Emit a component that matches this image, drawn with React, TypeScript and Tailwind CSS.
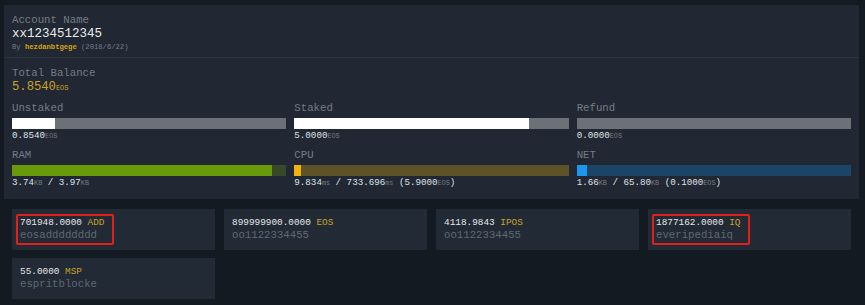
import React from 'react';

interface Bar {
  label: string;
  fill: string;
  track: string;
  pct: number;
  value: React.ReactNode;
}

interface Token {
  amount: string;
  symbol: string;
  account: string;
  marked?: boolean;
}

const Unit = ({ children }: { children: React.ReactNode }) => (
  <span className="text-[6.8px] text-[#737b84] font-normal">{children}</span>
);

const bars: Bar[] = [
  {
    label: 'Unstaked',
    fill: 'bg-white',
    track: 'bg-[#6b7177]',
    pct: 15.5,
    value: (<>0.8540<Unit>EOS</Unit></>)
  },
  {
    label: 'Staked',
    fill: 'bg-white',
    track: 'bg-[#6b7177]',
    pct: 85.4,
    value: (<>5.0000<Unit>EOS</Unit></>)
  },
  {
    label: 'Refund',
    fill: 'bg-white',
    track: 'bg-[#6b7177]',
    pct: 0,
    value: (<>0.0000<Unit>EOS</Unit></>)
  },
  {
    label: 'RAM',
    fill: 'bg-[#689a0c]',
    track: 'bg-[#38482a]',
    pct: 94.9,
    value: (<>3.74<Unit>KB</Unit> / 3.97<Unit>KB</Unit></>)
  },
  {
    label: 'CPU',
    fill: 'bg-[#f2b10f]',
    track: 'bg-[#5d5228]',
    pct: 2.6,
    value: (<>9.834<Unit>ms</Unit> / 733.696<Unit>ms</Unit> (5.9000<Unit>EOS</Unit>)</>)
  },
  {
    label: 'NET',
    fill: 'bg-[#1a98ee]',
    track: 'bg-[#1c4467]',
    pct: 3.7,
    value: (<>1.66<Unit>KB</Unit> / 65.80<Unit>KB</Unit> (0.1000<Unit>EOS</Unit>)</>)
  }
];

const tokens: Token[] = [
  { amount: '701948.0000', symbol: 'ADD', account: 'eosadddddddd', marked: true },
  { amount: '899999900.0000', symbol: 'EOS', account: 'oo1122334455' },
  { amount: '4118.9843', symbol: 'IPOS', account: 'oo1122334455' },
  { amount: '1877162.0000', symbol: 'IQ', account: 'everipediaiq', marked: true },
  { amount: '55.0000', symbol: 'MSP', account: 'espritblocke' }
];

export default function App() {
  return (
    <div className="w-[865px] h-[305px] bg-[#141a21] pt-[5px] pl-[4px] pr-[6px] font-['Liberation_Mono',monospace] overflow-hidden">
      {/* panel del account */}
      <div className="bg-[#212833] pt-[9px] pb-[10px]">
        <div className="px-[8px]">
          <div className="text-[10.7px] leading-[13px] text-[#747c85]">Account Name</div>
          <div className="text-[12.5px] leading-[14px] text-[#e8eaec]">xx1234512345</div>
          <div className="text-[7.2px] leading-[12px] text-[#747c85]">
            By <span className="text-[#d3a414] font-bold">hezdanbtgege</span> (2018/6/22)
          </div>
        </div>
        <div className="mt-[4px] h-px bg-[#2a3539]" />
        <div className="px-[8px]">
          <div className="mt-[9px] text-[10.7px] leading-[13px] text-[#747c85]">Total Balance</div>
          <div className="text-[12.2px] leading-[14px] text-[#c9a227]">
            5.8540<span className="text-[7px] text-[#c9a227]">EOS</span>
          </div>

          <div className="mt-[7px] grid grid-cols-3 gap-x-[8px] gap-y-[7px]">
            {bars.map((b) => (
              <div key={b.label}>
                <div className="text-[10.7px] leading-[13px] text-[#747c85]">{b.label}</div>
                <div className={`mt-[3px] h-[11px] ${b.track}`}>
                  <div className={`h-full ${b.fill}`} style={{ width: `${b.pct}%` }} />
                </div>
                <div className="mt-[1px] text-[9.2px] leading-[12px] text-[#dfe2e5] whitespace-nowrap">{b.value}</div>
              </div>
            ))}
          </div>
        </div>
      </div>

      {/* tokens */}
      <div className="mt-[10px] px-[8px] grid grid-cols-4 gap-x-[9px] gap-y-[8px]">
        {tokens.map((t, i) => (
          <div key={i} className="bg-[#222a35] pt-[5px] pb-[4px] pl-[4px]">
            <div
              className={`inline-block border-2 rounded-[2px] pl-[2px] pr-[8px] pb-[1px] ${t.marked ? 'border-[#e0201b]' : 'border-transparent'}`}
            >
              <div className="text-[9.4px] leading-[13px] text-[#e3e6e9] whitespace-nowrap">
                {t.amount} <span className="text-[#c9a227]">{t.symbol}</span>
              </div>
              <div className="text-[10.7px] leading-[13px] text-[#5f6873]">{t.account}</div>
            </div>
          </div>
        ))}
      </div>
    </div>
  );
}
